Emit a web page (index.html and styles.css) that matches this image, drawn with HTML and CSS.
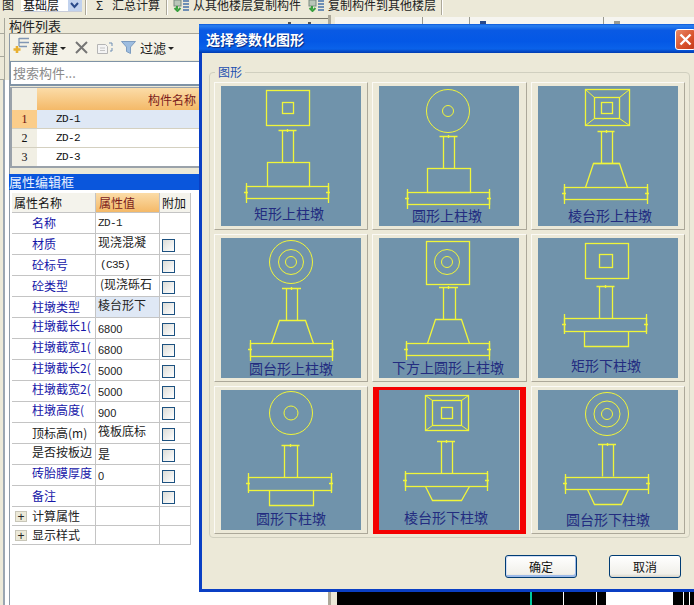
FILE: index.html
```html
<!DOCTYPE html>
<html lang="zh-CN">
<head>
  <meta charset="UTF-8" />
  <title>选择参数化图形</title>
  <link rel="stylesheet" href="styles.css">
</head>
<body>

  <!-- top toolbar, cut off by the top of the window -->
  <div class="topbar">
    <span class="top-text first">图</span>
    <div class="combo"><span>基础层</span><span class="combo-btn"><svg width="13" height="11" viewBox="0 0 13 11"><path d="M3 3l3.5 4L10 3" fill="none" stroke="#2a4a8a" stroke-width="2"/></svg></span></div>
    <span class="sep"></span>
    <span class="top-text sigma">Σ</span>
    <span class="top-text">汇总计算</span>
    <span class="sep"></span>
    <svg class="top-icon" width="17" height="12" viewBox="0 0 17 12"><rect x="1" y="0" width="7" height="6" fill="#b9c6b8" stroke="#7a8a80"/><path d="M4 6v3M1.5 8l3 3 3-3" fill="none" stroke="#3aa040" stroke-width="2"/><path d="M10 1h6M10 4h6M10 7h6M10 10h6" stroke="#6f8fb5" stroke-width="2"/></svg>
    <span class="top-text">从其他楼层复制构件</span>
    <svg class="top-icon second" width="17" height="12" viewBox="0 0 17 12"><rect x="1" y="0" width="7" height="6" fill="#b9c6b8" stroke="#7a8a80"/><path d="M4 6v3M1.5 8l3 3 3-3" fill="none" stroke="#3aa040" stroke-width="2"/><path d="M10 1h6M10 4h6M10 7h6M10 10h6" stroke="#6f8fb5" stroke-width="2"/></svg>
    <span class="top-text">复制构件到其他楼层</span>
    <span class="sep last"></span>
  </div>

  <div class="main">
    <div class="strip">
      <div class="strip-tab"></div>
      <div class="strip-tab tall"></div>
      <div class="strip-tab tall"></div>
      <div class="strip-rest"></div>
    </div>

    <div class="panel">
      <div class="panel-head"><span>构件列表</span><span class="pin"></span><span class="pin"></span></div>

      <div class="tools">
        <svg class="tool-new" width="18" height="17" viewBox="0 0 18 17"><path d="M6 1.5h10M6 5.5h10M6 9.5h8M6 1v8" fill="none" stroke="#8096b4" stroke-width="1.3"/><path d="M4 9v7M0.5 12.5h7" stroke="#e8b030" stroke-width="2.6"/></svg>
        <span class="tool-text">新建</span><span class="caret"></span>
        <svg class="tool-x" width="13" height="13" viewBox="0 0 13 13"><path d="M1 1l11 11M12 1L1 12" stroke="#757575" stroke-width="2"/></svg>
        <svg class="tool-copy" width="16" height="12" viewBox="0 0 16 12"><path d="M0.5 2.5h8l2 2v7H0.5z" fill="#f4f4f4" stroke="#b5b5b5"/><path d="M3 6h5M3 8.500h5" stroke="#c4c4c4"/><path d="M12 1h3v3M15 6v3h-2" fill="none" stroke="#6f8fb5"/></svg>
        <svg class="tool-filter" width="15" height="13" viewBox="0 0 15 13"><path d="M0.500 0.500h14L9.500 6v6.500l-4-2V6z" fill="#9dbde0" stroke="#7d9cc0"/></svg>
        <span class="tool-text filter-text">过滤</span><span class="caret"></span>
      </div>

      <div class="search">搜索构件...</div>

      <table class="list">
        <tr class="list-head"><th class="corner"></th><th class="list-title">构件名称</th></tr>
        <tr class="row-on"><td class="num">1</td><td class="code">ZD-1</td></tr>
        <tr><td class="num">2</td><td class="code">ZD-2</td></tr>
        <tr class="row-last"><td class="num">3</td><td class="code">ZD-3</td></tr>
      </table>

      <div class="bar">属性编辑框</div>

      <div class="props">
        <table class="prop-table">
          <tr class="prop-head"><th class="h-name">属性名称</th><th class="h-value">属性值</th><th class="h-add">附加</th></tr>
          <tr><td class="name blue">名称</td><td class="value code-val">ZD-1</td><td class="add"></td></tr>
          <tr><td class="name blue">材质</td><td class="value up">现浇混凝</td><td class="add"><span class="check"></span></td></tr>
          <tr><td class="name blue">砼标号</td><td class="value code-val indent">(C35)</td><td class="add"><span class="check"></span></td></tr>
          <tr><td class="name blue">砼类型</td><td class="value up indent">(现浇砾石</td><td class="add"><span class="check"></span></td></tr>
          <tr><td class="name blue">柱墩类型</td><td class="value up on">棱台形下</td><td class="add"><span class="check"></span></td></tr>
          <tr><td class="name blue up">柱墩截长1(</td><td class="value digits">6800</td><td class="add"><span class="check"></span></td></tr>
          <tr><td class="name blue up">柱墩截宽1(</td><td class="value digits">6800</td><td class="add"><span class="check"></span></td></tr>
          <tr><td class="name blue up">柱墩截长2(</td><td class="value digits">5000</td><td class="add"><span class="check"></span></td></tr>
          <tr><td class="name blue up">柱墩截宽2(</td><td class="value digits">5000</td><td class="add"><span class="check"></span></td></tr>
          <tr><td class="name blue up">柱墩高度(</td><td class="value digits">900</td><td class="add"><span class="check"></span></td></tr>
          <tr><td class="name">顶标高(m)</td><td class="value up">筏板底标</td><td class="add"><span class="check"></span></td></tr>
          <tr><td class="name up">是否按板边</td><td class="value">是</td><td class="add"><span class="check"></span></td></tr>
          <tr><td class="name blue up">砖胎膜厚度</td><td class="value digits">0</td><td class="add"><span class="check"></span></td></tr>
          <tr><td class="name blue">备注</td><td class="value"></td><td class="add"><span class="check"></span></td></tr>
          <tr class="group"><td class="group-name"><span class="plus">+</span>计算属性</td><td class="value"></td><td class="add"></td></tr>
          <tr class="group"><td class="group-name"><span class="plus">+</span>显示样式</td><td class="value"></td><td class="add"></td></tr>
        </table>
      </div>
    </div>

    <div class="right">
      <div class="right-head"><span class="cell c1"></span><span class="cell c2"></span><span class="cell c3"><i class="mark blue-mark"></i></span><span class="cell c4"><i class="mark"></i></span></div>
      <div class="right-fill"></div>
      <div class="drawing"></div>
    </div>
  </div>

  <!-- the dialog -->
  <div class="dialog">
    <div class="title">
      <span>选择参数化图形</span>
      <span class="close"><svg width="13" height="13" viewBox="0 0 13 13"><path d="M1.500 1.500l10 10M11.500 1.500l-10 10" stroke="#fff" stroke-width="2.400"/></svg></span>
    </div>

    <fieldset class="group-box">
      <legend>图形</legend>
      <div class="tiles">

        <div class="tile">
          <svg class="fig" width="140" height="140" viewBox="0 0 140 140">
            <rect x="45.500" y="4.500" width="43" height="35"/><rect x="61.500" y="16.500" width="11" height="11"/>
            <path d="M57.500 44.500h18M66.500 43v3M61.500 44.500v32M72.500 44.500v32"/>
            <rect x="46.500" y="76.500" width="42" height="24"/>
            <rect x="25.500" y="100.500" width="82" height="12"/>
            <path d="M25.500 97v20M107.500 97v20M23 106.500h4M105 106.500h4"/>
            <text x="68" y="133">矩形上柱墩</text>
          </svg>
        </div>

        <div class="tile">
          <svg class="fig" width="140" height="140" viewBox="0 0 140 140">
            <circle class="thin" cx="69" cy="25" r="21.500"/><circle class="thin" cx="69" cy="25" r="5.500"/>
            <path d="M60.500 50.500h18M69.500 49v3M64.500 50.500v32M75.500 50.500v32"/>
            <rect x="48.500" y="82.500" width="43" height="24"/>
            <rect x="28.500" y="106.500" width="82" height="12"/>
            <path d="M28.500 103v20M110.500 103v20M26 112.500h4M108 112.500h4"/>
            <text x="68" y="135">圆形上柱墩</text>
          </svg>
        </div>

        <div class="tile">
          <svg class="fig" width="140" height="140" viewBox="0 0 140 140">
            <rect x="47.500" y="3.500" width="44" height="36"/><rect x="56.500" y="11.500" width="25" height="21"/><rect x="63.500" y="16.500" width="11" height="11"/>
            <path class="thin" d="M47.500 3.500l9 8M91.500 3.500l-10 8M47.500 39.500l9-7M91.500 39.500l-10-7"/>
            <path d="M59.500 45.500h17M68.500 44v3M63.500 45.500v32M74.500 45.500v32"/>
            <path d="M47.500 101.500l8-24h26l8 24"/>
            <path d="M55.500 77.500h26"/>
            <rect x="26.500" y="101.500" width="83" height="12"/>
            <path d="M26.500 98v20M109.500 98v20M24 107.500h4M107 107.500h4"/>
            <text x="72" y="135">棱台形上柱墩</text>
          </svg>
        </div>

        <div class="tile">
          <svg class="fig" width="140" height="140" viewBox="0 0 140 140">
            <circle class="thin" cx="70" cy="24" r="21.500"/><circle class="thin" cx="70" cy="24" r="12.500"/><circle class="thin" cx="70" cy="24" r="5.500"/>
            <path d="M61 50.500h19M70.500 49v3M65.500 50.500v32M76.500 50.500v32"/>
            <path d="M50.500 105.500l8-23h26l8 23"/>
            <rect x="29.500" y="105.500" width="82" height="13"/>
            <path d="M29.500 102v21M111.500 102v21M27 111.500h4M109 111.500h4"/>
            <text x="70" y="136">圆台形上柱墩</text>
          </svg>
        </div>

        <div class="tile">
          <svg class="fig" width="140" height="140" viewBox="0 0 140 140">
            <rect x="47.500" y="3.500" width="43" height="43"/>
            <circle class="thin" cx="68" cy="24" r="12.500"/><circle class="thin" cx="68" cy="24" r="5.500"/>
            <path d="M60 49.500h19M69.500 48v3M64.500 49.500v32M76.500 49.500v32"/>
            <path d="M48.500 105.500l8-24h26l8 24"/>
            <rect x="27.500" y="105.500" width="83" height="12"/>
            <path d="M27.500 103v19M110.500 103v19M25 111.500h4M108 111.500h4"/>
            <text x="69" y="135">下方上圆形上柱墩</text>
          </svg>
        </div>

        <div class="tile">
          <svg class="fig" width="140" height="140" viewBox="0 0 140 140">
            <rect x="47.500" y="5.500" width="43" height="35"/><rect x="61.500" y="16.500" width="13" height="13"/>
            <path d="M58.500 48.500h18M67.500 47v3M61.500 48.500v32M74.500 48.500v32"/>
            <rect x="26.500" y="80.500" width="82" height="13"/>
            <path d="M26.500 76v20M108.500 76v20M24 86.500h4M106 86.500h4"/>
            <path d="M46.500 93.500v15h44v-15"/>
            <text x="68" y="133">矩形下柱墩</text>
          </svg>
        </div>

        <div class="tile">
          <svg class="fig" width="140" height="140" viewBox="0 0 140 140">
            <circle class="thin" cx="70" cy="23" r="21.500"/><circle class="thin" cx="70" cy="23" r="7"/>
            <path d="M60.500 55.500h18M69.500 54v3M63.500 55.500v32M76.500 55.500v32"/>
            <rect x="27.500" y="87.500" width="83" height="13"/>
            <path d="M27.500 83v20M110.500 83v20M25 93.500h4M108 93.500h4"/>
            <path d="M48.500 100.500v15h44v-15"/>
            <text x="70" y="134">圆形下柱墩</text>
          </svg>
        </div>

        <div class="tile selected">
          <svg class="fig" width="140" height="140" viewBox="0 0 140 140">
            <rect x="46.500" y="5.500" width="43" height="35"/><rect x="53.500" y="10.500" width="29" height="25"/><rect x="62.500" y="17.500" width="11" height="11"/>
            <path class="thin" d="M46.500 5.500l7 5M89.500 5.500l-7 5M46.500 40.500l7-5M89.500 40.500l-7-5"/>
            <path d="M58 51.500h18M67.500 50v3M62.500 51.500v32M73.500 51.500v32"/>
            <rect x="26.500" y="83.500" width="82" height="13"/>
            <path d="M26.500 81v20M108.500 81v20M24 90.500h4M106 90.500h4"/>
            <path d="M46.500 96.500l7 14h29l8-14"/>
            <text x="67" y="133">棱台形下柱墩</text>
          </svg>
        </div>

        <div class="tile">
          <svg class="fig" width="140" height="140" viewBox="0 0 140 140">
            <circle class="thin" cx="69" cy="24" r="21.500"/><circle class="thin" cx="69" cy="24" r="13"/><circle class="thin" cx="69" cy="24" r="5.500"/>
            <path d="M60 54.500h18M69.500 53v3M64.500 54.500v32M75.500 54.500v32"/>
            <rect x="27.500" y="87.500" width="83" height="12"/>
            <path d="M27.500 84v20M110.500 84v20M25 93.500h4M108 93.500h4"/>
            <path d="M49.500 99.500l7 15h27l7-15"/>
            <text x="70" y="135">圆台形下柱墩</text>
          </svg>
        </div>

      </div>
    </fieldset>

    <div class="buttons">
      <button class="btn default">确定</button>
      <button class="btn">取消</button>
    </div>
  </div>

</body>
</html>
```

FILE: styles.css
```css
* {
  box-sizing: border-box;
  margin: 0;
  padding: 0;
}
body {
  width: 694px;
  height: 605px;
  overflow: hidden;
  position: relative;
  display: flex;
  flex-direction: column;
  background: #ece9d8;
  font-family: "Noto Sans CJK SC", "Liberation Sans", sans-serif;
  font-size: 12px;
  color: #111;
}

/* top toolbar */
.topbar {
  height: 15px;
  flex: none;
  display: flex;
  overflow: hidden;
  background: #ece9d8;
}
.top-text {
  line-height: 12px;
  height: 12px;
  margin-top: -1px;
  white-space: nowrap;
  color: #222;
}
.top-text.first {
  margin-left: 2px;
  width: 19px;
}
.top-text.sigma {
  margin-left: 9px;
  width: 16px;
}
.combo {
  width: 61px;
  height: 12px;
  display: flex;
  justify-content: space-between;
  background: #fff;
  padding-left: 2px;
  line-height: 10px;
  border-bottom: 1px solid #c8ccd8;
}
.combo-btn {
  width: 14px;
  height: 11px;
  background: #c1d2ee;
  display: block;
}
.sep {
  width: 2px;
  height: 15px;
  margin-left: 3px;
  border-left: 1px solid #aca899;
  border-right: 1px solid #fff;
}
.top-icon {
  margin-left: 5px;
  margin-right: 3px;
  flex: none;
}
.top-icon.second {
  margin-left: 7px;
}
.sep.last {
  margin-left: 5px;
}
.sigma + .top-text + .sep {
  margin-left: 6px;
}

.main {
  flex: 1;
  display: flex;
  min-height: 0;
}

/* narrow strip at the far left */
.strip {
  width: 9px;
  padding-top: 3px;
  display: flex;
  flex-direction: column;
  align-items: flex-start;
}
.strip-tab {
  width: 5px;
  height: 16px;
  border-right: 1px solid #a8a89c;
  border-bottom: 1px solid #a8a89c;
}
.strip-tab.tall {
  height: 23px;
}
.strip-rest {
  flex: 1;
  margin-left: 3px;
  width: 6px;
  background: #fff;
  border-left: 2px solid #9aa6b2;
}

/* left panel */
.panel {
  width: 319px;
  margin-top: 3px;
  display: flex;
  flex-direction: column;
  overflow: hidden;
  background: linear-gradient(#8d9aa8, #8d9aa8) left top / 1px 100% no-repeat;
}
.panel-head {
  height: 16px;
  flex: none;
  display: flex;
  background: #ece9d8;
  border-top: 1px solid #77756a;
  border-bottom: 1px solid #a9a698;
  line-height: 14px;
  font-size: 13px;
  color: #222;
}
.panel-head span:first-child {
  flex: 1;
}
.pin {
  width: 3px;
  height: 5px;
  margin: 3px 17px 0 0;
  background: #555;
}
.tools {
  height: 26px;
  flex: none;
  margin-left: 1px;
  display: flex;
  align-items: center;
  background: #f4f2e8;
  color: #222;
  font-size: 13px;
}
.tool-new {
  margin-left: 3px;
  margin-top: -3px;
}
.tool-text {
  margin-left: 1px;
  width: 26px;
}
.caret {
  width: 0;
  height: 0;
  margin-left: 2px;
  margin-top: 2px;
  border: 3px solid transparent;
  border-top: 3px solid #222;
  border-bottom: 0;
}
.tool-x {
  margin-left: 9px;
}
.tool-copy {
  margin-left: 9px;
  margin-top: 2px;
}
.tool-filter {
  margin-left: 8px;
}
.filter-text {
  margin-left: 4px;
}
.search {
  height: 25px;
  flex: none;
  margin: 1px 0 0 1px;
  padding-left: 2px;
  line-height: 22px;
  font-size: 13px;
  color: #8a8a8a;
  background: #fff;
  border: 1px solid #7f93a6;
  border-bottom-width: 2px;
}

/* component list */
.list {
  width: 317px;
  height: 80px;
  flex: none;
  margin: 1px 0 0 1px;
  table-layout: fixed;
  border-collapse: separate;
  border-spacing: 0;
  background: #fff;
  border: 2px solid #9aa2aa;
  border-right: 0;
  border-top-width: 1px;
}
.list-head th {
  height: 22px;
  font-weight: normal;
}
.corner {
  width: 25px;
  background: #f1efe4;
}
.list-title {
  padding-left: 111px;
  text-align: left;
  font-size: 12px;
  color: #7c1c1c;
  background: linear-gradient(#fbdca8, #f4b968);
}
.num {
  width: 25px;
  height: 19px;
  text-align: center;
  font-family: "Liberation Serif", serif;
  font-size: 12px;
  background: #f1efe4;
  border-bottom: 1px solid #d4d0c0;
}
.code {
  padding-left: 19px;
  font-family: "Liberation Mono", monospace;
  font-size: 11px;
  letter-spacing: -0.6px;
  border-bottom: 1px solid #d4d0c0;
}
.row-on .num {
  background: #fbcd8a;
  color: #6a1010;
}
.row-on .code {
  background: #dfe8f5;
}
.row-last td {
  height: 18px;
  border-bottom: 0;
}

.bar {
  height: 16px;
  flex: none;
  margin-top: 6px;
  line-height: 15px;
  font-size: 13px;
  color: #e8f0ff;
  background: #0a56dc;
}

/* property table */
.props {
  flex: 1;
  margin-left: 1px;
  padding: 3px 0 0 2px;
  background: #fff;
}
.prop-table {
  width: 179px;
  table-layout: fixed;
  border-collapse: separate;
  border-spacing: 0;
  line-height: 14px;
}
.prop-table th {
  height: 20px;
  font-weight: normal;
  text-align: left;
  border-right: 1px solid #c4c4c4;
  border-bottom: 1px solid #c4c4c4;
}
.prop-table td {
  height: 21px;
  white-space: nowrap;
  overflow: hidden;
  border-right: 1px solid #c4c4c4;
  border-bottom: 1px solid #c4c4c4;
}
.h-name {
  width: 84px;
  padding-left: 2px;
  background: #f4f3ec;
}
.h-value {
  width: 64px;
  padding-left: 3px;
  color: #7c1c1c;
  background: linear-gradient(#fbdca8, #f4b968);
}
.h-add {
  width: 31px;
  padding-left: 2px;
  background: #f4f3ec;
}
.prop-table .name {
  padding: 0 0 0 20px;
  color: #222;
}
.prop-table .name.blue {
  color: #1616a8;
}
.prop-table .name.up {
  padding-bottom: 4px;
}
.prop-table .value {
  padding: 0 0 0 2px;
  color: #222;
}
.prop-table .value.up {
  padding-bottom: 4px;
}
.prop-table .value.indent {
  padding-left: 4px;
}
.prop-table .value.on {
  background: #dfe8f5;
}
.code-val, .digits {
  font-family: "Liberation Sans", sans-serif;
  font-size: 11px;
}
.code-val {
  font-family: "Liberation Mono", monospace;
  letter-spacing: -0.6px;
}
.prop-table .value.digits {
  padding-top: 2px;
}
.prop-table .add {
  padding: 2px 0 0 2px;
}
.check {
  display: block;
  width: 13px;
  height: 13px;
  border: 1px solid #1c5180;
  background: linear-gradient(135deg, #dcdcd7, #ffffff);
}
.prop-table .group td {
  height: 19px;
}
.prop-table .group-name {
  display: flex;
  align-items: center;
  padding-left: 3px;
  color: #222;
}
.plus {
  display: block;
  width: 12px;
  height: 11px;
  margin-right: 5px;
  line-height: 10px;
  text-align: center;
  font-family: "Liberation Sans", sans-serif;
  font-size: 12px;
  background: #ece9d8;
  border: 1px solid #c8c6b8;
}

/* right part, mostly behind the dialog */
.right {
  flex: 1;
  display: flex;
  flex-direction: column;
  padding-top: 2px;
  border-left: 3px solid #aca899;
}
.right-head {
  height: 8px;
  margin-left: 4px;
  display: flex;
  background: #f6f5f0;
}
.cell {
  border-right: 1px solid #9a9a90;
}
.c1 { width: 88px; }
.c2 { width: 47px; }
.c3 { width: 134px; }
.c4 { width: 90px; border-right: 0; }
.mark {
  display: block;
  width: 6px;
  height: 3px;
  margin: 4px 0 0 10px;
  background: #9a9a90;
}
.blue-mark {
  background: #2a4a8a;
}
.right-fill {
  flex: 1;
}
.drawing {
  height: 13px;
  margin-left: 6px;
  background: linear-gradient(to right,
    #000 193px, #00c8a0 193px, #00c8a0 195px, #000 195px,
    #000 226px, #fff 226px, #fff 227px, #000 227px,
    #000 259px, #fff 259px, #fff 260px, #000 260px,
    #000 269px, #fff 269px, #fff 336px, #000 336px,
    #000 346px, #fff 346px, #fff 347px, #000 347px,
    #000 352px, #fff 352px, #fff 353px, #000 353px);
}

/* dialog sits on top of everything */
.dialog {
  position: absolute;
  left: 199px;
  top: 24px;
  width: 510px;
  height: 568px;
  background: #ece9d8;
  border: 3px solid #0a3fc4;
  border-top: 0;
}
.title {
  height: 29px;
  margin: 0 -3px;
  padding-left: 7px;
  display: flex;
  align-items: center;
  font-size: 14px;
  font-weight: bold;
  color: #fff;
  text-shadow: 1px 1px 1px #0a2a80;
  background: linear-gradient(#0a57d8 0, #2a80f0 6%, #0a5ae4 22%, #0458e6 60%, #0a62ea 86%, #003bb0 100%);
}
.close {
  position: absolute;
  left: 473px;
  top: 5px;
  width: 21px;
  height: 21px;
  display: flex;
  align-items: center;
  justify-content: center;
  border: 1px solid #fff;
  border-radius: 3px;
  background: linear-gradient(135deg, #e98a68, #d8512a 60%, #c23a1a);
}
.group-box {
  width: 481px;
  margin: 11px 0 0 7px;
  padding: 2px 4px 3px 4px;
  border: 1px solid #d0cfbf;
  border-radius: 4px;
}
.group-box legend {
  margin-left: 1px;
  padding: 0 3px;
  line-height: 16px;
  color: #1c50b0;
}
.tiles {
  display: grid;
  grid-template-columns: 154px 155px 154px;
  grid-auto-rows: 148px;
  gap: 4px;
}
.tile {
  padding: 3px 0 0 6px;
  border: 1px solid;
  border-color: #fbfaf5 #aca899 #aca899 #fbfaf5;
}
.tile.selected {
  margin: 1px 1px 0 1px;
  padding: 0;
  border-color: #f40000;
  border-width: 3px 6px 4px 6px;
}

/* the pictures */
.fig {
  display: block;
  background: #7093ab;
  fill: none;
  stroke: #f0f53a;
  stroke-width: 1.300;
}
.fig .thin {
  stroke-width: 1;
}
.fig text {
  fill: #232c80;
  stroke: none;
  font-size: 14px;
  text-anchor: middle;
}

.buttons {
  display: flex;
  gap: 32px;
  margin: 17px 0 0 303px;
}
.btn {
  width: 72px;
  height: 23px;
  font: inherit;
  color: #111;
  border: 1px solid #003c74;
  border-radius: 3px;
  background: linear-gradient(#ffffff, #f1f0ea 85%, #d8d4c8);
}
.btn.default {
  box-shadow: inset -1px -2px 0 #9dbae8, inset 1px 1px 0 #cfdcf4;
}
```
